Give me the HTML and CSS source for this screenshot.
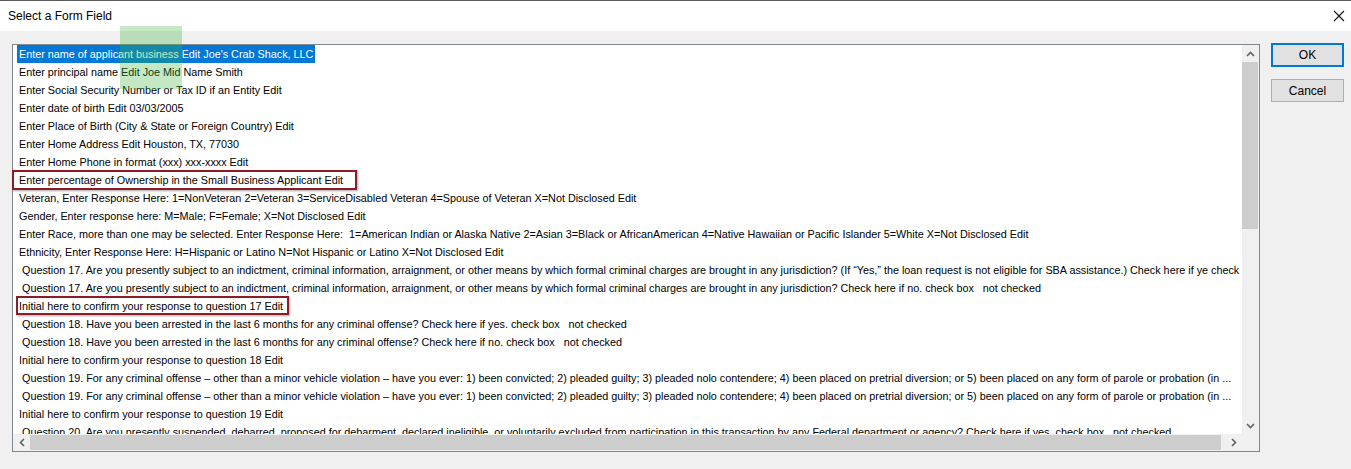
FILE: index.html
```html
<!DOCTYPE html>
<html>
<head>
<meta charset="utf-8">
<title>Select a Form Field</title>
<link rel="stylesheet" href="styles.css">
</head>
<body>
<div class="window">
  <div class="titlebar">
    <span class="title">Select a Form Field</span>
    <svg class="close" width="12" height="12" viewBox="0 0 12 12"><path d="M1 1 L11 11 M11 1 L1 11" stroke="#111" stroke-width="1.1" fill="none"/></svg>
  </div>
  <div class="content">
    <div class="listbox">
      <div class="items">
        <div class="row"><span class="sel">Enter name of applicant business Edit Joe's Crab Shack, LLC</span></div>
        <div class="row"><span>Enter principal name Edit Joe Mid Name Smith</span></div>
        <div class="row"><span>Enter Social Security Number or Tax ID if an Entity Edit</span></div>
        <div class="row"><span>Enter date of birth Edit 03/03/2005</span></div>
        <div class="row"><span>Enter Place of Birth (City &amp; State or Foreign Country) Edit</span></div>
        <div class="row"><span>Enter Home Address Edit Houston, TX, 77030</span></div>
        <div class="row"><span>Enter Home Phone in format (xxx) xxx-xxxx Edit</span></div>
        <div class="row"><span>Enter percentage of Ownership in the Small Business Applicant Edit</span></div>
        <div class="row"><span>Veteran, Enter Response Here: 1=NonVeteran 2=Veteran 3=ServiceDisabled Veteran 4=Spouse of Veteran X=Not Disclosed Edit</span></div>
        <div class="row"><span>Gender, Enter response here: M=Male; F=Female; X=Not Disclosed Edit</span></div>
        <div class="row"><span>Enter Race, more than one may be selected. Enter Response Here:  1=American Indian or Alaska Native 2=Asian 3=Black or AfricanAmerican 4=Native Hawaiian or Pacific Islander 5=White X=Not Disclosed Edit</span></div>
        <div class="row"><span>Ethnicity, Enter Response Here: H=Hispanic or Latino N=Not Hispanic or Latino X=Not Disclosed Edit</span></div>
        <div class="row"><span> Question 17. Are you presently subject to an indictment, criminal information, arraignment, or other means by which formal criminal charges are brought in any jurisdiction? (If “Yes,” the loan request is not eligible for SBA assistance.) Check here if ye check box   not checked</span></div>
        <div class="row"><span> Question 17. Are you presently subject to an indictment, criminal information, arraignment, or other means by which formal criminal charges are brought in any jurisdiction? Check here if no. check box   not checked</span></div>
        <div class="row"><span>Initial here to confirm your response to question 17 Edit</span></div>
        <div class="row"><span> Question 18. Have you been arrested in the last 6 months for any criminal offense? Check here if yes. check box   not checked</span></div>
        <div class="row"><span> Question 18. Have you been arrested in the last 6 months for any criminal offense? Check here if no. check box   not checked</span></div>
        <div class="row"><span>Initial here to confirm your response to question 18 Edit</span></div>
        <div class="row"><span> Question 19. For any criminal offense – other than a minor vehicle violation – have you ever: 1) been convicted; 2) pleaded guilty; 3) pleaded nolo contendere; 4) been placed on pretrial diversion; or 5) been placed on any form of parole or probation (in ...</span></div>
        <div class="row"><span> Question 19. For any criminal offense – other than a minor vehicle violation – have you ever: 1) been convicted; 2) pleaded guilty; 3) pleaded nolo contendere; 4) been placed on pretrial diversion; or 5) been placed on any form of parole or probation (in ...</span></div>
        <div class="row"><span>Initial here to confirm your response to question 19 Edit</span></div>
        <div class="row"><span> Question 20. Are you presently suspended, debarred, proposed for debarment, declared ineligible, or voluntarily excluded from participation in this transaction by any Federal department or agency? Check here if yes. check box   not checked</span></div>
      </div>
      <div class="vscroll">
        <div class="sb-btn"><svg width="9" height="6" viewBox="0 0 9 6"><path d="M1 5 L4.5 1.5 L8 5" stroke="#606060" stroke-width="1.6" fill="none"/></svg></div>
        <div class="vtrack"><div class="vthumb"></div></div>
        <div class="sb-btn"><svg width="9" height="6" viewBox="0 0 9 6"><path d="M1 1 L4.5 4.5 L8 1" stroke="#606060" stroke-width="1.6" fill="none"/></svg></div>
      </div>
      <div class="hscroll">
        <div class="sb-btn"><svg width="6" height="9" viewBox="0 0 6 9"><path d="M5 1 L1.5 4.5 L5 8" stroke="#606060" stroke-width="1.6" fill="none"/></svg></div>
        <div class="htrack"><div class="hthumb"></div></div>
        <div class="sb-btn"><svg width="6" height="9" viewBox="0 0 6 9"><path d="M1 1 L4.5 4.5 L1 8" stroke="#606060" stroke-width="1.6" fill="none"/></svg></div>
      </div>
      <div class="corner"></div>
    </div>
    <div class="buttons">
      <button class="btn ok">OK</button>
      <button class="btn">Cancel</button>
    </div>
  </div>
  <div class="mark mark-1"></div>
  <div class="mark mark-2"></div>
  <div class="green"></div>
</div>
</body>
</html>
```

FILE: styles.css
```css
* { box-sizing: border-box; }
html, body { margin: 0; padding: 0; }
body {
  width: 1351px;
  height: 469px;
  background: #f0f0f0;
  font-family: "Liberation Sans", Arial, sans-serif;
  overflow: hidden;
}
.window {
  position: relative;
  width: 1351px;
  height: 469px;
  background: #f0f0f0;
}
.titlebar {
  height: 31px;
  border-top: 1px solid #5c5c5c;
  background: #ffffff;
  display: flex;
  align-items: center;
  justify-content: space-between;
  padding: 0 6px 0 8px;
}
.title {
  font-size: 12px;
  color: #000;
  margin-top: -1px;
}
.close { margin-top: -1px; }
.content {
  display: flex;
  align-items: flex-start;
  gap: 11px;
  padding: 13px 0 0 12px;
}
.listbox {
  width: 1248px;
  height: 408px;
  border: 1px solid #828790;
  background: #fff;
  display: grid;
  grid-template-columns: 1fr 17px;
  grid-template-rows: 1fr 17px;
}
.items {
  overflow: hidden;
  padding-left: 4px;
  font-size: 10.8px;
  color: #000;
}
.row {
  height: 18px;
  line-height: 18px;
  white-space: pre;
}
.row span { padding: 0 2px; display: inline-block; height: 18px; }
.row .sel { background: #0078d7; color: #fff; }
.vscroll {
  background: #f0f0f0;
  display: flex;
  flex-direction: column;
}
.sb-btn {
  width: 17px;
  height: 17px;
  flex: none;
  display: flex;
  align-items: center;
  justify-content: center;
}
.vtrack { flex: 1; padding: 0 1px 0 0; }
.vthumb { height: 167px; background: #cdcdcd; }
.hscroll {
  background: #f0f0f0;
  display: flex;
}
.htrack { flex: 1; padding: 1px 4px 1px 0; }
.hthumb { height: 100%; background: #cdcdcd; }
.corner { background: #f0f0f0; }
.buttons {
  display: flex;
  flex-direction: column;
  gap: 12px;
  margin-top: -1px;
}
.btn {
  width: 73px;
  height: 23px;
  background: #e1e1e1;
  border: 1px solid #adadad;
  font-family: "Liberation Sans", Arial, sans-serif;
  font-size: 12px;
  color: #000;
  padding: 0;
}
.btn.ok { height: 24px; border: 2px solid #0078d7; }
.mark {
  position: absolute;
  border: 2px solid #8c1c26;
  box-shadow: 1px 1px 2px rgba(0,0,0,0.35);
}
.mark-1 { left: 12px; top: 170px; width: 345px; height: 20px; }
.mark-2 { left: 16px; top: 296px; width: 273px; height: 19px; }
.green {
  position: absolute;
  left: 120px;
  top: 26px;
  width: 62px;
  height: 63px;
  background: rgba(60, 180, 60, 0.3);
}
```
